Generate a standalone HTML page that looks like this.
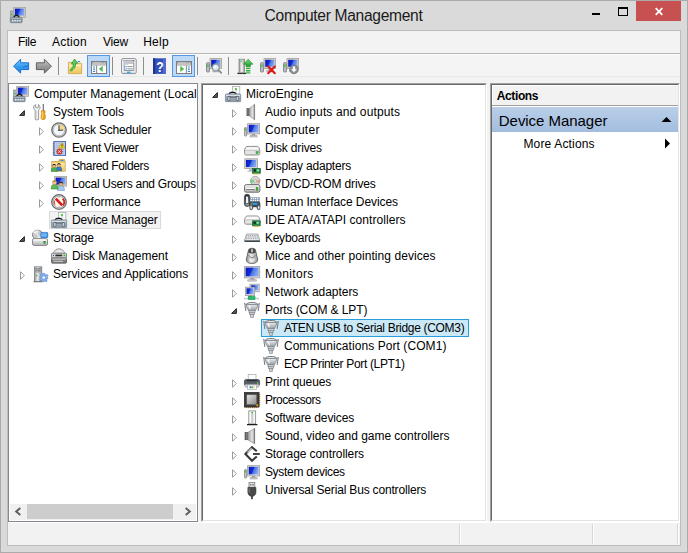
<!DOCTYPE html>
<html lang="en"><head><meta charset="utf-8"><title>Computer Management</title>
<style>
html,body{margin:0;padding:0}
body{width:688px;height:553px;position:relative;overflow:hidden;background:#dadada;font-family:"Liberation Sans",sans-serif;font-size:12px;color:#000}
div,span,svg{position:absolute;box-sizing:border-box}
.t{white-space:nowrap;line-height:20px;height:20px}
.ic{overflow:visible}
#outer{left:0;top:0;width:688px;height:553px;border:1px solid #ababab}
#cedge{left:7px;top:30px;width:674px;height:516px;border:1px solid #bcbcbc;background:#f3f3f3}
#menu{left:8px;top:31px;width:672px;height:22px;background:#f3f3f3}
#msep{left:8px;top:53px;width:672px;height:1px;background:#b6b6b6}
#msep2{left:8px;top:54px;width:672px;height:1px;background:#fcfcfc}
#tbar{left:8px;top:55px;width:672px;height:22px;background:#f4f4f4}
#tgap{left:8px;top:76px;width:672px;height:7px;background:#f3f3f3;border-top:1px solid #e5e7e9}
.vsep{width:1px;height:18px;top:57px;background:#8d8d8d}
.tog{top:55px;width:23px;height:22px;background:#bcdaf8;border:1px solid #5698e4}
#close{left:636px;top:1px;width:45px;height:20px;background:#c75050}
#lp{left:8px;top:83px;width:190px;height:439px;background:#fff;border:1px solid #828790}
#mp{left:201px;top:83px;width:286px;height:439px;background:#fff;border-style:solid;border-width:1px;border-color:#a0a0a0 #fff #fff #a0a0a0}
#mp i{position:absolute;left:0;top:0;right:0;bottom:0;border-style:solid;border-width:1px;border-color:#696969 #e3e3e3 #e3e3e3 #696969}
#ap{left:490px;top:83px;width:190px;height:439px;background:#fff;border-style:solid;border-width:1px;border-color:#a0a0a0 #fff #fff #a0a0a0}
#ap i{position:absolute;left:0;top:0;right:0;bottom:0;border-style:solid;border-width:1px;border-color:#696969 #e3e3e3 #e3e3e3 #696969}
#ahdr{left:492px;top:85px;width:186px;height:20px;background:#f2f2f2;border-top:1px solid #fff;border-left:1px solid #fff}
#ahl{left:492px;top:105px;width:186px;height:1px;background:#a0a0a0}
#aband{left:492px;top:107px;width:186px;height:25px;background:linear-gradient(#b9cfe9,#a3bddf)}
#status{left:8px;top:522px;width:672px;height:23px;background:#f2f2f2;border-top:1px solid #fff}
.sdiv{top:524px;width:2px;height:20px;border-left:1px solid #d7d7d7;border-right:1px solid #fff}
#lsel{left:49px;top:211px;width:112px;height:18px;background:#f2f2f2;border:1px solid #dadada}
#msel{left:261px;top:319px;width:208px;height:18px;background:#cbe8f6;border:1px solid #26a0da}
#hs{left:10px;top:504px;width:186px;height:16px;background:#f0f0f0}
#hthumb{left:27px;top:504px;width:146px;height:15px;background:#cdcdcd}
</style></head><body>
<div id="outer"></div>
<div id="cedge"></div>
<div id="menu"></div><div id="msep"></div><div id="msep2"></div><div id="tbar"></div><div id="tgap"></div>

<svg width="0" height="0" style="position:absolute"><defs>
<linearGradient id="gScr" x1="0" y1="0" x2="1" y2="0.3"><stop offset="0" stop-color="#0a14bc"/><stop offset="0.5" stop-color="#1230d2"/><stop offset="0.6" stop-color="#4a72e8"/><stop offset="1" stop-color="#86a6f2"/></linearGradient>
<linearGradient id="gBack" x1="0" y1="0" x2="0" y2="1"><stop offset="0" stop-color="#7cc8fb"/><stop offset="0.5" stop-color="#3a9ff0"/><stop offset="1" stop-color="#1b7fe0"/></linearGradient>
<linearGradient id="gFwd" x1="0" y1="0" x2="0" y2="1"><stop offset="0" stop-color="#c6c6c6"/><stop offset="0.5" stop-color="#9c9c9c"/><stop offset="1" stop-color="#7c7c7c"/></linearGradient>
<linearGradient id="gTool" x1="0" y1="0" x2="0" y2="1"><stop offset="0" stop-color="#b4c0c9"/><stop offset="0.35" stop-color="#9fadb8"/><stop offset="1" stop-color="#8898a5"/></linearGradient>
<linearGradient id="gMetalH" x1="0" y1="0" x2="1" y2="0"><stop offset="0" stop-color="#8a8a8a"/><stop offset="0.4" stop-color="#ececec"/><stop offset="1" stop-color="#9a9a9a"/></linearGradient>
<linearGradient id="gMetalV" x1="0" y1="0" x2="0" y2="1"><stop offset="0" stop-color="#f4f4f4"/><stop offset="1" stop-color="#b4b4b4"/></linearGradient>
<linearGradient id="gCone" x1="0" y1="0" x2="1" y2="0"><stop offset="0" stop-color="#9a9a9a"/><stop offset="0.6" stop-color="#e2e2e2"/><stop offset="1" stop-color="#b4b4b4"/></linearGradient>
<linearGradient id="gPort" x1="0" y1="0" x2="0" y2="1"><stop offset="0" stop-color="#eef0f2"/><stop offset="1" stop-color="#959ba1"/></linearGradient>
<linearGradient id="gGreen" x1="0" y1="0" x2="0" y2="1"><stop offset="0" stop-color="#7be07b"/><stop offset="1" stop-color="#1f9a2c"/></linearGradient>
<linearGradient id="gFold" x1="0" y1="0" x2="0" y2="1"><stop offset="0" stop-color="#fbe9a6"/><stop offset="1" stop-color="#efc85c"/></linearGradient>
<linearGradient id="gCpu" x1="0" y1="0" x2="1" y2="1"><stop offset="0" stop-color="#e6e6e6"/><stop offset="1" stop-color="#8a8a8a"/></linearGradient>
<radialGradient id="gDisc" cx="0.5" cy="0.5" r="0.5"><stop offset="0" stop-color="#fff"/><stop offset="0.25" stop-color="#c8c8c8"/><stop offset="1" stop-color="#e4e4e4"/></radialGradient>
</defs></svg>
<svg class="ic" style="left:10px;top:7px" width="16" height="16" viewBox="0 0 16 16"><rect x="0.6" y="4" width="2.6" height="6.6" fill="#b4b8bc" stroke="#7d8186" stroke-width="0.6"/><rect x="1.1" y="6.6" width="1.3" height="1.6" fill="#35c835"/><rect x="3.6" y="0.5" width="12" height="9.8" fill="#d8d5c6" stroke="#a8a597" stroke-width="0.8"/><rect x="4.8" y="1.6" width="9.6" height="7" fill="url(#gScr)"/><path d="M4 10.6 C4 7.8 9 7.8 9 10.6" fill="none" stroke="#1e2226" stroke-width="1.4"/><rect x="0.3" y="10.5" width="11.8" height="5.2" rx="0.8" fill="url(#gTool)" stroke="#6b7a86" stroke-width="0.7"/><rect x="0.8" y="12.3" width="10.8" height="0.8" fill="#55636e"/><rect x="2" y="12.7" width="1.4" height="1.6" fill="#eef2f5"/><rect x="4.4" y="12.7" width="1.4" height="1.6" fill="#eef2f5"/><rect x="6.8" y="12.7" width="1.4" height="1.6" fill="#eef2f5"/><rect x="9.2" y="12.7" width="1.4" height="1.6" fill="#eef2f5"/></svg>
<div id="close"></div>
<svg class="ic" style="left:592px;top:13px" width="8" height="2"><rect width="8" height="2" fill="#000"/></svg>
<svg class="ic" style="left:618px;top:7px" width="10" height="9"><path d="M0 0H10V9H0Z M1 2V8H9V2Z" fill="#000" fill-rule="evenodd"/></svg>
<svg class="ic" style="left:655px;top:8px" width="8" height="7" viewBox="0 0 8 7"><path d="M0.7 0.2 L7.3 6.8 M7.3 0.2 L0.7 6.8" stroke="#fff" stroke-width="1.8" fill="none"/></svg>
<div class="tog" style="left:87px"></div><div class="tog" style="left:172px"></div>
<div class="vsep" style="left:58px"></div>
<div class="vsep" style="left:112px"></div>
<div class="vsep" style="left:143px"></div>
<div class="vsep" style="left:197px"></div>
<div class="vsep" style="left:228px"></div>
<svg class="ic" style="left:13px;top:58px" width="16" height="16" viewBox="0 0 16 16"><path d="M0.6 8.2 L7.6 1.2 L7.6 4.8 L15.6 4.8 L15.6 11.6 L7.6 11.6 L7.6 15.2 Z" fill="url(#gBack)" stroke="#1a6fd0" stroke-width="1" stroke-linejoin="round"/><path d="M8.5 9.2 L14.6 9.2 L14.6 6.6 Z" fill="#1560c8" opacity="0.55"/></svg>
<svg class="ic" style="left:36px;top:58px" width="16" height="16" viewBox="0 0 16 16"><path d="M15.4 8.2 L8.4 1.2 L8.4 4.8 L0.4 4.8 L0.4 11.6 L8.4 11.6 L8.4 15.2 Z" fill="url(#gFwd)" stroke="#5e5e5e" stroke-width="1" stroke-linejoin="round"/></svg>
<svg class="ic" style="left:67px;top:58px" width="16" height="16" viewBox="0 0 16 16"><path d="M1.4 4.4 H6.4 L7.4 5.6 H14.6 V15.6 H1.4 Z" fill="url(#gFold)" stroke="#cfa94e" stroke-width="0.9"/><path d="M2 7.6 H14" stroke="#fff6d2" stroke-width="1"/><path d="M3 12.6 C3.6 10.6 6.6 10 6.4 5.8 L4.4 6 L7.6 1 L10.6 5 L8.6 5.4 C9 10.4 5.4 11.4 4.6 13 Z" fill="#5fd05f" stroke="#1f8a28" stroke-width="0.7" stroke-linejoin="round"/><rect x="10.8" y="3" width="2.4" height="1.2" fill="#4a8ae0"/></svg>
<svg class="ic" style="left:91px;top:58px" width="16" height="16" viewBox="0 0 16 16"><rect x="0.5" y="3.5" width="15" height="12" fill="#fff" stroke="#7e7e7e" stroke-width="1"/><rect x="1" y="4" width="14" height="1.8" fill="#8c8c8c"/><rect x="1.6" y="4.5" width="8.8" height="0.8" fill="#f4f4f4"/><rect x="11.2" y="4.4" width="1.1" height="1" fill="#f4f4f4"/><rect x="13.2" y="4.4" width="1.1" height="1" fill="#f4f4f4"/><rect x="1" y="5.8" width="14" height="0.8" fill="#e2e2e2"/><rect x="1" y="6.6" width="14" height="0.8" fill="#858585"/><rect x="5.2" y="7.4" width="0.9" height="8" fill="#7a7a7a"/><rect x="2" y="8.4" width="2.2" height="1.2" rx="0.6" fill="#3f7fd0"/><rect x="2" y="10.6" width="2.2" height="1.2" rx="0.6" fill="#3f7fd0"/><rect x="2" y="12.8" width="2.2" height="1.2" rx="0.6" fill="#3f7fd0"/><path d="M11.4 8.4 V13.4 L8.2 10.9 Z" fill="#4cc04c" stroke="#38a838" stroke-width="0.5" stroke-linejoin="round"/></svg>
<svg class="ic" style="left:121px;top:58px" width="16" height="16" viewBox="0 0 16 16"><rect x="0.6" y="0.6" width="14.6" height="15" rx="1.4" fill="#f8f9fb" stroke="#858585" stroke-width="0.9"/><rect x="2" y="2" width="11.8" height="1.6" fill="#a9aeb4"/><rect x="11.6" y="2.1" width="1.6" height="1.3" fill="#8a8a8a"/><rect x="3.2" y="5" width="9.6" height="7.4" fill="#fff" stroke="#7e848c" stroke-width="0.9"/><rect x="3.2" y="5" width="4" height="1.8" fill="#c8ced6"/><rect x="4.4" y="8" width="1.3" height="1.2" fill="#3f8ee6"/><rect x="6.4" y="8.1" width="5.2" height="1" fill="#8d949c"/><rect x="4.4" y="10.2" width="1.3" height="1.2" fill="#3f8ee6"/><rect x="6.4" y="10.3" width="5.2" height="1" fill="#8d949c"/><rect x="2" y="13.6" width="11.8" height="1.4" fill="#d6dbe0"/><rect x="6" y="13.6" width="3.4" height="1.6" fill="#2fa7ee"/></svg>
<svg class="ic" style="left:152px;top:58px" width="16" height="16" viewBox="0 0 16 16"><rect x="1" y="0.3" width="13" height="15.6" fill="#3350b8"/><rect x="1" y="0.3" width="2.2" height="15.6" fill="#22348c"/><rect x="11" y="0.3" width="3" height="15.6" fill="#5876d6" opacity="0.7"/><text transform="translate(7.9 13.6) scale(0.84 1)" text-anchor="middle" font-family="Liberation Sans,sans-serif" font-weight="700" font-size="14.5" fill="#fff">?</text></svg>
<svg class="ic" style="left:176px;top:58px" width="16" height="16" viewBox="0 0 16 16"><rect x="0.5" y="3.5" width="15" height="12" fill="#fff" stroke="#7e7e7e" stroke-width="1"/><rect x="1" y="4" width="14" height="1.8" fill="#8c8c8c"/><rect x="1.6" y="4.5" width="8.8" height="0.8" fill="#f4f4f4"/><rect x="11.2" y="4.4" width="1.1" height="1" fill="#f4f4f4"/><rect x="13.2" y="4.4" width="1.1" height="1" fill="#f4f4f4"/><rect x="1" y="5.8" width="14" height="0.8" fill="#e2e2e2"/><rect x="1" y="6.6" width="14" height="0.8" fill="#858585"/><rect x="9.9" y="7.4" width="0.9" height="8" fill="#7a7a7a"/><rect x="11.8" y="8.4" width="2.2" height="1.2" rx="0.6" fill="#3f7fd0"/><rect x="11.8" y="10.6" width="2.2" height="1.2" rx="0.6" fill="#3f7fd0"/><rect x="11.8" y="12.8" width="2.2" height="1.2" rx="0.6" fill="#3f7fd0"/><path d="M4.6 8.4 V13.4 L7.8 10.9 Z" fill="#4cc04c" stroke="#38a838" stroke-width="0.5" stroke-linejoin="round"/></svg>
<svg class="ic" style="left:206px;top:58px" width="16" height="16" viewBox="0 0 16 16"><rect x="0.5" y="4.6" width="3" height="9.4" rx="1" fill="#b9bdc1" stroke="#72777c" stroke-width="0.8"/><rect x="1.3" y="6.4" width="1.3" height="2.4" fill="#35c035"/><rect x="4" y="0.6" width="11.6" height="9.8" fill="#d9d6c8" stroke="#a29f92" stroke-width="0.8"/><rect x="5.2" y="1.8" width="9.2" height="7" fill="url(#gScr)"/><rect x="8.6" y="10.8" width="3" height="1.6" fill="#9a9a9a"/><rect x="6.6" y="12.2" width="7" height="1.6" rx="0.6" fill="#c4c4c4" stroke="#8a8a8a" stroke-width="0.5"/><circle cx="9.8" cy="9.4" r="3.5" fill="#dbeeff" fill-opacity="0.85" stroke="#8e9499" stroke-width="1.3"/><circle cx="9.2" cy="8.8" r="1.6" fill="#fff" opacity="0.8"/><path d="M12.4 12 L15.2 14.8" stroke="#8a8f94" stroke-width="1.9" stroke-linecap="round"/></svg>
<svg class="ic" style="left:237px;top:58px" width="16" height="16" viewBox="0 0 16 16"><path d="M0.4 15.4 H9" stroke="#222" stroke-width="1.3"/><rect x="2" y="1.2" width="5.6" height="13.6" fill="url(#gMetalH)" stroke="#8a8a8a" stroke-width="0.8"/><rect x="3.3" y="2.6" width="1.4" height="1.4" fill="#4ccc4c"/><rect x="4.4" y="6" width="1.2" height="8" fill="#fafafa" opacity="0.8"/><path d="M11.2 1.2 L15.8 6.2 H13.4 V8.4 H9 V6.2 H6.6 Z" fill="url(#gGreen)" stroke="#1e8e28" stroke-width="0.7"/><rect x="9" y="9.6" width="4.4" height="1.5" fill="#2fae3a"/><rect x="9" y="12" width="4.4" height="1.5" fill="#2fae3a"/><rect x="9" y="14.3" width="4.4" height="1.2" fill="#2fae3a"/></svg>
<svg class="ic" style="left:260px;top:58px" width="16" height="16" viewBox="0 0 16 16"><rect x="0.5" y="4.6" width="3" height="9.4" rx="1" fill="#b9bdc1" stroke="#72777c" stroke-width="0.8"/><rect x="1.3" y="6.4" width="1.3" height="2.4" fill="#35c035"/><rect x="4" y="0.6" width="11.6" height="9.8" fill="#d9d6c8" stroke="#a29f92" stroke-width="0.8"/><rect x="5.2" y="1.8" width="9.2" height="7" fill="url(#gScr)"/><rect x="8.6" y="10.8" width="3" height="1.6" fill="#9a9a9a"/><rect x="6.6" y="12.2" width="7" height="1.6" rx="0.6" fill="#c4c4c4" stroke="#8a8a8a" stroke-width="0.5"/><path d="M8.2 8.6 L14.8 15.2 M14.8 8.6 L8.2 15.2" stroke="#e01616" stroke-width="2.1" stroke-linecap="round"/></svg>
<svg class="ic" style="left:283px;top:58px" width="16" height="16" viewBox="0 0 16 16"><rect x="0.5" y="4.6" width="3" height="9.4" rx="1" fill="#b9bdc1" stroke="#72777c" stroke-width="0.8"/><rect x="1.3" y="6.4" width="1.3" height="2.4" fill="#35c035"/><rect x="4" y="0.6" width="11.6" height="9.8" fill="#d9d6c8" stroke="#a29f92" stroke-width="0.8"/><rect x="5.2" y="1.8" width="9.2" height="7" fill="url(#gScr)"/><rect x="8.6" y="10.8" width="3" height="1.6" fill="#9a9a9a"/><rect x="6.6" y="12.2" width="7" height="1.6" rx="0.6" fill="#c4c4c4" stroke="#8a8a8a" stroke-width="0.5"/><circle cx="11" cy="11.4" r="4.3" fill="#8f9296" stroke="#6c6f73" stroke-width="0.8"/><path d="M9.9 8.6 H12.1 V11.2 H13.8 L11 14.2 L8.2 11.2 H9.9 Z" fill="#fff"/></svg>
<div id="lp"></div><div id="mp"><i></i></div><div id="ap"><i></i></div>
<div id="lsel"></div><div id="msel"></div>
<svg class="ic" style="left:13px;top:86px" width="16" height="16" viewBox="0 0 16 16"><rect x="0.6" y="4" width="2.6" height="6.6" fill="#b4b8bc" stroke="#7d8186" stroke-width="0.6"/><rect x="1.1" y="6.6" width="1.3" height="1.6" fill="#35c835"/><rect x="3.6" y="0.5" width="12" height="9.8" fill="#d8d5c6" stroke="#a8a597" stroke-width="0.8"/><rect x="4.8" y="1.6" width="9.6" height="7" fill="url(#gScr)"/><path d="M4 10.6 C4 7.8 9 7.8 9 10.6" fill="none" stroke="#1e2226" stroke-width="1.4"/><rect x="0.3" y="10.5" width="11.8" height="5.2" rx="0.8" fill="url(#gTool)" stroke="#6b7a86" stroke-width="0.7"/><rect x="0.8" y="12.3" width="10.8" height="0.8" fill="#55636e"/><rect x="2" y="12.7" width="1.4" height="1.6" fill="#eef2f5"/><rect x="4.4" y="12.7" width="1.4" height="1.6" fill="#eef2f5"/><rect x="6.8" y="12.7" width="1.4" height="1.6" fill="#eef2f5"/><rect x="9.2" y="12.7" width="1.4" height="1.6" fill="#eef2f5"/></svg>
<svg class="ic" style="left:32px;top:104px" width="16" height="16" viewBox="0 0 16 16"><path d="M3.2 15.4 V6.2 C1.6 5.4 1 3.4 2.2 1.6 L3.6 0.6 V3.4 L5 4 L6.4 3.4 V0.6 C8.4 1.6 8.6 4.8 6.6 6.2 V15.4 C6 16 3.8 16 3.2 15.4 Z" fill="#f3f3f3" stroke="#8d8d8d" stroke-width="0.9" stroke-linejoin="round"/><path d="M4.2 7 V14.6" stroke="#c9c9c9" stroke-width="0.9"/><rect x="10.6" y="0" width="1.2" height="7.4" fill="#9a9a9a"/><rect x="11.2" y="0" width="0.6" height="7.4" fill="#5e5e5e"/><path d="M9.4 6.8 H13 V9 L12.4 9.8 L13.2 11 V14.6 C13.2 15.8 9.2 15.8 9.2 14.6 V11 L10 9.8 L9.4 9 Z" fill="#f0a81a" stroke="#bd7a08" stroke-width="0.7"/><path d="M10.4 7.4 V14.6" stroke="#ffd873" stroke-width="0.9"/></svg>
<svg class="ic" style="left:18.4px;top:109px" width="8" height="8" viewBox="0 0 8 8"><path d="M6.4 1.6 L6.4 6.4 L1.6 6.4 Z" fill="#595959" stroke="#262626" stroke-width="1" stroke-linejoin="miter"/></svg>
<svg class="ic" style="left:51px;top:122px" width="16" height="16" viewBox="0 0 16 16"><circle cx="8" cy="8" r="7.2" fill="#dcdcdc" stroke="#6c6c6c" stroke-width="1.3"/><circle cx="8" cy="8" r="5.7" fill="#f3f7fc" stroke="#a4a4a4" stroke-width="0.7"/><path d="M8 8 V2.3 A5.7 5.7 0 0 1 13.7 8 Z" fill="#f5dc8c"/><path d="M8 3.2 V9 M7.2 8.2 H12.2" stroke="#3a3a3a" stroke-width="1" fill="none"/></svg>
<svg class="ic" style="left:38px;top:126px" width="7" height="11" viewBox="0 0 7 11"><path d="M1.5 1.7 L5.3 5.5 L1.5 9.3 Z" fill="#fff" stroke="#9a9a9a" stroke-width="1" stroke-linejoin="miter"/></svg>
<svg class="ic" style="left:51px;top:140px" width="16" height="16" viewBox="0 0 16 16"><g transform="translate(0.8 0.7) scale(0.94)"><rect x="2.2" y="1" width="12.4" height="14.6" fill="#cfdcf3" stroke="#4965b4" stroke-width="1.1"/><path d="M4 3.4 H13.6 M4 5.4 H13.6 M4 7.4 H13.6 M4 9.4 H13.6 M4 11.4 H13.6 M4 13.4 H13.6" stroke="#8ba0d4" stroke-width="0.8"/><path d="M1 2.6 H3.2 M1 4.6 H3.2 M1 6.6 H3.2 M1 8.6 H3.2 M1 10.6 H3.2 M1 12.6 H3.2 M1 14.4 H3.2" stroke="#6e7078" stroke-width="1"/><path d="M10.8 1.8 L14.4 8 H7.2 Z" fill="#f9d628" stroke="#b8920a" stroke-width="0.6" stroke-linejoin="round"/><rect x="10.4" y="3.8" width="0.9" height="2.2" fill="#222"/><rect x="10.4" y="6.5" width="0.9" height="0.8" fill="#222"/><circle cx="8.2" cy="11.6" r="2.9" fill="#dc3a32" stroke="#a81c18" stroke-width="0.5"/><path d="M7 10.4 L9.4 12.8 M9.4 10.4 L7 12.8" stroke="#fff" stroke-width="1"/></g></svg>
<svg class="ic" style="left:38px;top:144px" width="7" height="11" viewBox="0 0 7 11"><path d="M1.5 1.7 L5.3 5.5 L1.5 9.3 Z" fill="#fff" stroke="#9a9a9a" stroke-width="1" stroke-linejoin="miter"/></svg>
<svg class="ic" style="left:51px;top:158px" width="16" height="16" viewBox="0 0 16 16"><path d="M0.6 3.6 H7.4 L8.4 1.4 H13.4 L14.2 3.6 V13.2 H0.6 Z" fill="#e9c35a" stroke="#c19a32" stroke-width="0.7"/><rect x="1" y="4.6" width="12.8" height="8.4" fill="url(#gFold)"/><rect x="9.4" y="2" width="3.2" height="1.1" fill="#4a8ae0"/><g transform="translate(0.2 4.6) scale(0.86)"><path d="M5.6 9.4 C5.6 5.3999999999999995 7.199999999999999 4.6 9.0 4.6 C10.8 4.6 12.399999999999999 5.3999999999999995 12.399999999999999 9.4 Z" fill="#3b78cc" stroke="#1f4f9a" stroke-width="0.6"/><circle cx="9.0" cy="3.0" r="2.1" fill="#e8b98a" stroke="#9c6b3a" stroke-width="0.4"/><path d="M6.8999999999999995 2.8 C6.8999999999999995 0.20000000000000007 11.1 0.20000000000000007 11.1 2.8 C10.2 1.6 7.8 1.6 6.8999999999999995 2.8 Z" fill="#2a2a2a"/><path d="M0 10.2 C0 6.199999999999999 1.6 5.4 3.4 5.4 C5.2 5.4 6.8 6.199999999999999 6.8 10.2 Z" fill="#49b05a" stroke="#24803a" stroke-width="0.6"/><circle cx="3.4" cy="3.8000000000000003" r="2.1" fill="#e8b98a" stroke="#9c6b3a" stroke-width="0.4"/><path d="M1.3 3.6 C1.3 1.0 5.5 1.0 5.5 3.6 C4.6 2.4000000000000004 2.2 2.4000000000000004 1.3 3.6 Z" fill="#2a2a2a"/></g></svg>
<svg class="ic" style="left:38px;top:162px" width="7" height="11" viewBox="0 0 7 11"><path d="M1.5 1.7 L5.3 5.5 L1.5 9.3 Z" fill="#fff" stroke="#9a9a9a" stroke-width="1" stroke-linejoin="miter"/></svg>
<svg class="ic" style="left:51px;top:176px" width="16" height="16" viewBox="0 0 16 16"><rect x="3.6" y="0.5" width="12" height="9.6" fill="#d8d5c6" stroke="#a8a597" stroke-width="0.8"/><rect x="4.7" y="1.6" width="9.8" height="7" fill="url(#gScr)"/><rect x="8.6" y="10.2" width="4" height="1.2" fill="#a9a9a9"/><path d="M6.6 14.399999999999999 C6.6 10.399999999999999 8.2 9.6 10.0 9.6 C11.8 9.6 13.399999999999999 10.399999999999999 13.399999999999999 14.399999999999999 Z" fill="#a8cdee" stroke="#5c8fc0" stroke-width="0.6"/><circle cx="10.0" cy="8.0" r="2.1" fill="#e0b07c" stroke="#9c6b3a" stroke-width="0.4"/><path d="M7.8999999999999995 7.8 C7.8999999999999995 5.2 12.1 5.2 12.1 7.8 C11.2 6.6 8.8 6.6 7.8999999999999995 7.8 Z" fill="#3a2a1a"/><path d="M0.2 13.0 C0.2 9.0 1.8 8.2 3.6 8.2 C5.4 8.2 7.0 9.0 7.0 13.0 Z" fill="#5cb85c" stroke="#2c8a38" stroke-width="0.6"/><circle cx="3.6" cy="6.6000000000000005" r="2.1" fill="#efc592" stroke="#9c6b3a" stroke-width="0.4"/><path d="M1.5 6.4 C1.5 3.8000000000000003 5.7 3.8000000000000003 5.7 6.4 C4.8 5.2 2.4000000000000004 5.2 1.5 6.4 Z" fill="#a8803a"/></svg>
<svg class="ic" style="left:38px;top:180px" width="7" height="11" viewBox="0 0 7 11"><path d="M1.5 1.7 L5.3 5.5 L1.5 9.3 Z" fill="#fff" stroke="#9a9a9a" stroke-width="1" stroke-linejoin="miter"/></svg>
<svg class="ic" style="left:51px;top:194px" width="16" height="16" viewBox="0 0 16 16"><circle cx="8" cy="8" r="7.3" fill="#d8d8d8" stroke="#6a6a6a" stroke-width="1.3"/><circle cx="8" cy="8" r="5.8" fill="#fbf8ee" stroke="#9c9c9c" stroke-width="0.7"/><path d="M8 2.8 V3.8 M8 12.2 V13.2 M2.8 8 H3.8" stroke="#777" stroke-width="0.7"/><path d="M4.8 4.6 L11.2 11.4" stroke="#d81e1e" stroke-width="2.7"/><path d="M11.6 4.8 C13.6 6.6 13.6 9.6 12 11.4" fill="none" stroke="#d81e1e" stroke-width="1.9"/><path d="M3.6 6.6 C3 8 3.2 9.6 4 10.8" fill="none" stroke="#d81e1e" stroke-width="1"/></svg>
<svg class="ic" style="left:38px;top:198px" width="7" height="11" viewBox="0 0 7 11"><path d="M1.5 1.7 L5.3 5.5 L1.5 9.3 Z" fill="#fff" stroke="#9a9a9a" stroke-width="1" stroke-linejoin="miter"/></svg>
<svg class="ic" style="left:51px;top:212px" width="16" height="16" viewBox="0 0 16 16"><rect x="7.4" y="0.5" width="7.4" height="8" fill="#fdfdfd" stroke="#a9adb1" stroke-width="0.8"/><rect x="9.8" y="3.4" width="2.2" height="4.6" fill="#d5d9dc"/><rect x="9.9" y="1.9" width="2.1" height="2.1" rx="0.6" fill="#4ccc3a"/><path d="M4.2 8.4 C4.6 5.4 10.6 5.4 11 8.4" fill="none" stroke="#fff" stroke-width="2.6"/><path d="M4.2 8.2 C4.8 5.6 10.4 5.6 11 8.2" fill="none" stroke="#15181b" stroke-width="1.5"/><rect x="0.4" y="7.9" width="15.3" height="7.8" rx="0.8" fill="url(#gTool)" stroke="#74838f" stroke-width="0.7"/><rect x="1" y="9.2" width="14" height="0.8" fill="#e3e9ee"/><rect x="3" y="10.6" width="10" height="0.9" fill="#4c5761"/><rect x="3" y="10.4" width="1.9" height="4.2" fill="#f4f6f8" stroke="#3c444c" stroke-width="0.6"/><rect x="11.2" y="10.4" width="1.9" height="4.2" fill="#f4f6f8" stroke="#3c444c" stroke-width="0.6"/></svg>
<svg class="ic" style="left:32px;top:230px" width="16" height="16" viewBox="0 0 16 16"><ellipse cx="5.6" cy="4.8" rx="5.2" ry="4.6" fill="#c9c9c9" stroke="#7e7e7e" stroke-width="0.9"/><path d="M5.6 4.8 L1 2.8 A5.2 4.6 0 0 1 6.6 0.3 Z" fill="#efefef"/><path d="M5.6 4.8 L10.2 6.8 A5.2 4.6 0 0 1 4.6 9.3 Z" fill="#e6e6e6"/><circle cx="5.6" cy="4.8" r="1.3" fill="#fff" stroke="#9a9a9a" stroke-width="0.5"/><rect x="8.8" y="2.4" width="7" height="5.4" rx="0.8" fill="#2f8fe6" stroke="#1c64b8" stroke-width="0.6"/><rect x="9.2" y="3.6" width="5.6" height="0.9" fill="#a8d6ff"/><rect x="9.2" y="5.4" width="5.6" height="0.9" fill="#a8d6ff"/><rect x="0.5" y="8.6" width="15" height="6.8" rx="1.6" fill="url(#gMetalV)" stroke="#7c7c7c" stroke-width="0.9"/><rect x="1.4" y="9.4" width="13.2" height="1.2" rx="0.6" fill="#fff"/><rect x="11.8" y="11.2" width="1.7" height="2.4" fill="#36c236" stroke="#1d7e22" stroke-width="0.4"/></svg>
<svg class="ic" style="left:18.4px;top:235px" width="8" height="8" viewBox="0 0 8 8"><path d="M6.4 1.6 L6.4 6.4 L1.6 6.4 Z" fill="#595959" stroke="#262626" stroke-width="1" stroke-linejoin="miter"/></svg>
<svg class="ic" style="left:51px;top:248px" width="16" height="16" viewBox="0 0 16 16"><path d="M2.4 6 C2.4 -1 13.6 -1 13.6 6 Z" fill="#e9e9e9" stroke="#8a8a8a" stroke-width="0.8"/><ellipse cx="8" cy="3.2" rx="3.4" ry="1.2" fill="#fbfbfb" stroke="#b0b0b0" stroke-width="0.5"/><rect x="0.5" y="5.2" width="15" height="4.8" rx="0.8" fill="#d4d4d4" stroke="#6e6e6e" stroke-width="0.8"/><rect x="4.4" y="6.6" width="6.8" height="1.7" fill="#2c2c2c"/><rect x="2" y="7" width="1" height="1" fill="#2a4ad0"/><rect x="12.6" y="6.6" width="1.6" height="1.6" fill="#36c236"/><rect x="0.5" y="10" width="15" height="5.2" rx="0.8" fill="#7c7c7c" stroke="#5e5e5e" stroke-width="0.8"/><rect x="1.4" y="10.6" width="13.2" height="0.9" fill="#eaeaea"/><rect x="2.4" y="12.8" width="9.6" height="0.9" fill="#dcdcdc"/></svg>
<svg class="ic" style="left:32px;top:266px" width="16" height="16" viewBox="0 0 16 16"><rect x="2.4" y="0.8" width="7.4" height="14.8" fill="url(#gMetalH)" stroke="#7c838a" stroke-width="0.8"/><rect x="3.6" y="2.4" width="5" height="1" fill="#5e646a"/><rect x="3.6" y="4.4" width="5" height="1" fill="#5e646a"/><rect x="3.6" y="6.4" width="5" height="0.8" fill="#a8aeb4"/><rect x="4" y="9" width="1.3" height="1.3" fill="#3bbf3b"/><path d="M1.4 15.8 H10.6" stroke="#6a6a6a" stroke-width="0.8"/><g transform="translate(11.8 11.6)"><path d="M-0.8 -4.3 H0.8 L1.1 -3.1 L2.3 -2.6 L3.3 -3.3 L4.3 -2.2 L3.5 -1.2 L3.9 0 L4.3 0.8 L3.3 1.1 L2.9 2.3 L3.3 3.3 L2.2 4.3 L1.2 3.5 L0 3.9 L-0.8 4.3 L-1.1 3.3 L-2.3 2.9 L-3.3 3.3 L-4.3 2.2 L-3.5 1.2 L-3.9 0 L-4.3 -0.8 L-3.3 -1.1 L-2.9 -2.3 L-3.3 -3.3 L-2.2 -4.3 L-1.2 -3.5 Z" fill="#86aeec" stroke="#4d7ac8" stroke-width="0.5"/><circle r="1.7" fill="#f4f8ff" stroke="#4d7ac8" stroke-width="0.4"/></g></svg>
<svg class="ic" style="left:19px;top:270px" width="7" height="11" viewBox="0 0 7 11"><path d="M1.5 1.7 L5.3 5.5 L1.5 9.3 Z" fill="#fff" stroke="#9a9a9a" stroke-width="1" stroke-linejoin="miter"/></svg>
<svg class="ic" style="left:225px;top:86px" width="16" height="16" viewBox="0 0 16 16"><rect x="7.4" y="0.5" width="7.4" height="8" fill="#fdfdfd" stroke="#a9adb1" stroke-width="0.8"/><rect x="9.8" y="3.4" width="2.2" height="4.6" fill="#d5d9dc"/><rect x="9.9" y="1.9" width="2.1" height="2.1" rx="0.6" fill="#4ccc3a"/><path d="M4.2 8.4 C4.6 5.4 10.6 5.4 11 8.4" fill="none" stroke="#fff" stroke-width="2.6"/><path d="M4.2 8.2 C4.8 5.6 10.4 5.6 11 8.2" fill="none" stroke="#15181b" stroke-width="1.5"/><rect x="0.4" y="7.9" width="15.3" height="7.8" rx="0.8" fill="url(#gTool)" stroke="#74838f" stroke-width="0.7"/><rect x="1" y="9.2" width="14" height="0.8" fill="#e3e9ee"/><rect x="3" y="10.6" width="10" height="0.9" fill="#4c5761"/><rect x="3" y="10.4" width="1.9" height="4.2" fill="#f4f6f8" stroke="#3c444c" stroke-width="0.6"/><rect x="11.2" y="10.4" width="1.9" height="4.2" fill="#f4f6f8" stroke="#3c444c" stroke-width="0.6"/></svg>
<svg class="ic" style="left:211.4px;top:91px" width="8" height="8" viewBox="0 0 8 8"><path d="M6.4 1.6 L6.4 6.4 L1.6 6.4 Z" fill="#595959" stroke="#262626" stroke-width="1" stroke-linejoin="miter"/></svg>
<svg class="ic" style="left:244px;top:104px" width="16" height="16" viewBox="0 0 16 16"><g transform="translate(0 0) scale(1 1)"><rect x="2.9" y="4.4" width="2.3" height="7.4" fill="#5a5a5a" stroke="#444" stroke-width="0.5"/><rect x="3.5" y="5" width="0.8" height="6.2" fill="#8a8a8a"/><path d="M5.2 4.4 L10.6 0.4 V15.8 L5.2 11.8 Z" fill="url(#gCone)" stroke="#858585" stroke-width="0.6" stroke-linejoin="round"/><path d="M10.4 0.6 V15.6" stroke="#7a7a7a" stroke-width="0.9"/></g></svg>
<svg class="ic" style="left:231px;top:108px" width="7" height="11" viewBox="0 0 7 11"><path d="M1.5 1.7 L5.3 5.5 L1.5 9.3 Z" fill="#fff" stroke="#9a9a9a" stroke-width="1" stroke-linejoin="miter"/></svg>
<svg class="ic" style="left:244px;top:122px" width="16" height="16" viewBox="0 0 16 16"><g transform="translate(0 0.9)"><rect x="0.5" y="4.6" width="2.2" height="8.6" rx="0.8" fill="#c2c2c2" stroke="#777" stroke-width="0.7"/><rect x="1" y="5.6" width="1.2" height="2" fill="#35c835"/><rect x="3.6" y="0.8" width="12" height="10.2" fill="#dcdcdc" stroke="#9c9c9c" stroke-width="0.8"/><rect x="4.7" y="1.9000000000000001" width="9.8" height="7.6" fill="url(#gScr)"/><path d="M8.2 11.2 H11 L11.6 12.6 H7.6 Z" fill="#9a9a9a"/><rect x="5.8" y="12.6" width="7.6" height="1.5" rx="0.7" fill="#cfcfcf" stroke="#8c8c8c" stroke-width="0.5"/></g></svg>
<svg class="ic" style="left:231px;top:126px" width="7" height="11" viewBox="0 0 7 11"><path d="M1.5 1.7 L5.3 5.5 L1.5 9.3 Z" fill="#fff" stroke="#9a9a9a" stroke-width="1" stroke-linejoin="miter"/></svg>
<svg class="ic" style="left:244px;top:140px" width="16" height="16" viewBox="0 0 16 16"><path d="M3 6.4 H13.4 C14.6 6.4 15.8 9.0 15.8 10.0 V13.6 C15.8 14.6 15 15 14 15 H2.4 C1.4 15 0.6 14.6 0.6 13.6 V10.0 C0.6 9.0 1.8 6.4 3 6.4 Z" fill="#e4e4e4" stroke="#858585" stroke-width="0.9"/><path d="M3.2 7.2 H13.2 C14 7.2 14.8 9.0 15 10.0 H1.4 C1.6 9.0 2.4 7.2 3.2 7.2 Z" fill="#f9f9f9"/><path d="M1 10.2 H15.4" stroke="#b8b8b8" stroke-width="0.7"/><rect x="12" y="11.6" width="2.2" height="2" fill="#3ac43a" stroke="#1e7e22" stroke-width="0.4"/></svg>
<svg class="ic" style="left:231px;top:144px" width="7" height="11" viewBox="0 0 7 11"><path d="M1.5 1.7 L5.3 5.5 L1.5 9.3 Z" fill="#fff" stroke="#9a9a9a" stroke-width="1" stroke-linejoin="miter"/></svg>
<svg class="ic" style="left:244px;top:158px" width="16" height="16" viewBox="0 0 16 16"><rect x="0.8" y="0.8" width="12.6" height="9.8" fill="#dcdcdc" stroke="#9c9c9c" stroke-width="0.8"/><rect x="1.9000000000000001" y="1.9000000000000001" width="10.399999999999999" height="7.200000000000001" fill="url(#gScr)"/><rect x="5" y="11.4" width="3.6" height="1.4" fill="#9a9a9a"/><rect x="3.4" y="12.6" width="6" height="1.2" fill="#c4c4c4"/><rect x="8.6" y="10.4" width="7.8" height="5" fill="#1f8a4c" stroke="#0f5a2e" stroke-width="0.6"/><rect x="9.799999999999999" y="11.4" width="2" height="2" fill="#111"/><rect x="12.8" y="11.4" width="2.2" height="2" fill="#9fe0b4"/><rect x="9.6" y="15.4" width="5.6" height="1" fill="#e0b030"/></svg>
<svg class="ic" style="left:231px;top:162px" width="7" height="11" viewBox="0 0 7 11"><path d="M1.5 1.7 L5.3 5.5 L1.5 9.3 Z" fill="#fff" stroke="#9a9a9a" stroke-width="1" stroke-linejoin="miter"/></svg>
<svg class="ic" style="left:244px;top:176px" width="16" height="16" viewBox="0 0 16 16"><circle cx="11.2" cy="5" r="4.7" fill="url(#gDisc)" stroke="#8e8e8e" stroke-width="0.7"/><path d="M11.2 5 L7 3 A4.7 4.7 0 0 0 7.4 8 Z" fill="#5ad06a" opacity="0.7"/><path d="M11.2 5 L15.4 3.4 A4.7 4.7 0 0 1 15 7.6 Z" fill="#f07860" opacity="0.6"/><circle cx="11.2" cy="5" r="1.1" fill="#fff" stroke="#999" stroke-width="0.4"/><rect x="0.5" y="8.6" width="15.4" height="7.6" rx="1.8" fill="url(#gMetalV)" stroke="#707070" stroke-width="1"/><rect x="2" y="12" width="9" height="1" fill="#fff"/><rect x="2" y="13" width="9" height="0.9" fill="#777"/><rect x="12.2" y="11.4" width="1.7" height="3" fill="#36c236" stroke="#1d7e22" stroke-width="0.4"/></svg>
<svg class="ic" style="left:231px;top:180px" width="7" height="11" viewBox="0 0 7 11"><path d="M1.5 1.7 L5.3 5.5 L1.5 9.3 Z" fill="#fff" stroke="#9a9a9a" stroke-width="1" stroke-linejoin="miter"/></svg>
<svg class="ic" style="left:244px;top:194px" width="16" height="16" viewBox="0 0 16 16"><rect x="0.4" y="0.3" width="5.4" height="12.2" rx="2.4" fill="#3c444c" stroke="#252b31" stroke-width="0.6"/><path d="M2.2 2 H4 L4.4 9 H1.8 Z" fill="#f2f2f2"/><rect x="1.2" y="9.6" width="3.8" height="2.2" rx="1" fill="#8e969e"/><rect x="2.3" y="1.2" width="1.6" height="1.4" fill="#1c2024"/><rect x="6" y="3.2" width="9.8" height="4.6" fill="#8a98b6"/><path d="M7 4.4 H15" stroke="#fff" stroke-width="1.1" stroke-dasharray="1.1 0.95"/><path d="M6.4 6.6 H15.6" stroke="#f4f6f8" stroke-width="1.5" stroke-dasharray="1.5 0.7"/><path d="M6.4 7.8 H15.4 C16.3 9.2 16.3 13 15.8 15.6 H13.6 L12.6 12.8 H9.2 L8.2 15.6 H6 C5.4 13 5.4 9.2 6.4 7.8 Z" fill="#4a525c" stroke="#30363c" stroke-width="0.5"/><rect x="9" y="8.8" width="4.2" height="2.2" fill="#2a96f0"/><rect x="7.4" y="8.6" width="1.3" height="1.3" fill="#58d048"/><rect x="6.6" y="10.2" width="1.2" height="1.2" fill="#f09020"/><ellipse cx="7.1" cy="13.4" rx="0.9" ry="1.7" fill="#dfe3e7"/><ellipse cx="14.7" cy="13.4" rx="0.9" ry="1.7" fill="#dfe3e7"/><rect x="9.6" y="11.6" width="3" height="0.9" fill="#23282d"/></svg>
<svg class="ic" style="left:231px;top:198px" width="7" height="11" viewBox="0 0 7 11"><path d="M1.5 1.7 L5.3 5.5 L1.5 9.3 Z" fill="#fff" stroke="#9a9a9a" stroke-width="1" stroke-linejoin="miter"/></svg>
<svg class="ic" style="left:244px;top:212px" width="16" height="16" viewBox="0 0 16 16"><path d="M3 4 H13.4 C14.6 4 15.8 6.6 15.8 7.6 V10.799999999999999 C15.8 11.799999999999999 15 12.2 14 12.2 H2.4 C1.4 12.2 0.6 11.799999999999999 0.6 10.799999999999999 V7.6 C0.6 6.6 1.8 4 3 4 Z" fill="#e4e4e4" stroke="#858585" stroke-width="0.9"/><path d="M3.2 4.8 H13.2 C14 4.8 14.8 6.6 15 7.6 H1.4 C1.6 6.6 2.4 4.8 3.2 4.8 Z" fill="#f9f9f9"/><path d="M1 7.8 H15.4" stroke="#b8b8b8" stroke-width="0.7"/><rect x="8.4" y="8.8" width="7.8" height="5" fill="#1f8a4c" stroke="#0f5a2e" stroke-width="0.6"/><rect x="9.6" y="9.8" width="2" height="2" fill="#111"/><rect x="12.600000000000001" y="9.8" width="2.2" height="2" fill="#9fe0b4"/><rect x="9.4" y="13.8" width="5.6" height="1" fill="#e0b030"/></svg>
<svg class="ic" style="left:231px;top:216px" width="7" height="11" viewBox="0 0 7 11"><path d="M1.5 1.7 L5.3 5.5 L1.5 9.3 Z" fill="#fff" stroke="#9a9a9a" stroke-width="1" stroke-linejoin="miter"/></svg>
<svg class="ic" style="left:244px;top:230px" width="16" height="16" viewBox="0 0 16 16"><path d="M2.6 4 H13.8 L16 10.4 H0.4 Z" fill="#eceef0" stroke="#8e9298" stroke-width="0.7"/><path d="M2.6 5.4 H14 M2.2 6.9 H14.4 M1.8 8.4 H14.8" stroke="#7e848c" stroke-width="0.9" stroke-dasharray="0.9 0.9"/><path d="M0.4 10.4 H16 V11.4 C16 11.8 15.6 12 15.2 12 H1.2 C0.8 12 0.4 11.8 0.4 11.4 Z" fill="#3e444a"/></svg>
<svg class="ic" style="left:231px;top:234px" width="7" height="11" viewBox="0 0 7 11"><path d="M1.5 1.7 L5.3 5.5 L1.5 9.3 Z" fill="#fff" stroke="#9a9a9a" stroke-width="1" stroke-linejoin="miter"/></svg>
<svg class="ic" style="left:244px;top:248px" width="16" height="16" viewBox="0 0 16 16"><path d="M4.6 1.6 C5 -0.2 11 -0.2 11.4 1.6 L12.8 8 C14.6 12 13.8 15.4 8 15.4 C2.2 15.4 1.4 12 3.2 8 Z" fill="url(#gMetalH)" stroke="#5c5c5c" stroke-width="0.9"/><path d="M4.9 1.6 C5.3 0.3 10.7 0.3 11.1 1.6 L11.7 4.4 C9.8 5.8 6.2 5.8 4.3 4.4 Z" fill="#4a4a4a"/><rect x="7.3" y="1" width="1.4" height="3.4" rx="0.7" fill="#e8e8e8"/><path d="M4.6 7 C6 10.6 10 10.6 11.4 7" fill="none" stroke="#6e6e6e" stroke-width="0.8"/><path d="M5.4 11 C7 13.4 9 13.4 10.6 11" fill="none" stroke="#fff" stroke-width="1" opacity="0.9"/></svg>
<svg class="ic" style="left:231px;top:252px" width="7" height="11" viewBox="0 0 7 11"><path d="M1.5 1.7 L5.3 5.5 L1.5 9.3 Z" fill="#fff" stroke="#9a9a9a" stroke-width="1" stroke-linejoin="miter"/></svg>
<svg class="ic" style="left:244px;top:266px" width="16" height="16" viewBox="0 0 16 16"><rect x="0.5" y="0.5" width="15.2" height="11.4" fill="#dcdcdc" stroke="#9c9c9c" stroke-width="0.8"/><rect x="1.6" y="1.6" width="13.0" height="8.8" fill="url(#gScr)"/><path d="M6.4 12 H10 L10.6 13.6 H5.8 Z" fill="#a0a0a0"/><rect x="3.6" y="13.6" width="9" height="1.6" rx="0.7" fill="#d2d2d2" stroke="#8c8c8c" stroke-width="0.5"/></svg>
<svg class="ic" style="left:231px;top:270px" width="7" height="11" viewBox="0 0 7 11"><path d="M1.5 1.7 L5.3 5.5 L1.5 9.3 Z" fill="#fff" stroke="#9a9a9a" stroke-width="1" stroke-linejoin="miter"/></svg>
<svg class="ic" style="left:244px;top:284px" width="16" height="16" viewBox="0 0 16 16"><rect x="6" y="0.2" width="9.2" height="7.6" fill="#dcdcdc" stroke="#9c9c9c" stroke-width="0.8"/><rect x="7.1" y="1.3" width="6.999999999999999" height="5.0" fill="url(#gScr)"/><rect x="1.4" y="3.2" width="9.2" height="8.4" fill="#dcdcdc" stroke="#9c9c9c" stroke-width="0.8"/><rect x="2.5" y="4.300000000000001" width="6.999999999999999" height="5.800000000000001" fill="url(#gScr)"/><rect x="5.4" y="11.6" width="2" height="2" fill="#7a7a7a"/><path d="M0 14.6 H15" stroke="#c9cdd0" stroke-width="1.6"/><rect x="4.2" y="12.4" width="6.8" height="3.2" fill="#1fbf6c" stroke="#14904e" stroke-width="0.5"/></svg>
<svg class="ic" style="left:231px;top:288px" width="7" height="11" viewBox="0 0 7 11"><path d="M1.5 1.7 L5.3 5.5 L1.5 9.3 Z" fill="#fff" stroke="#9a9a9a" stroke-width="1" stroke-linejoin="miter"/></svg>
<svg class="ic" style="left:244px;top:302px" width="16" height="16" viewBox="0 0 16 16"><path d="M0.4 1.2 L0.9 2.2 H15.1 L15.6 1.2" stroke="#6e747a" stroke-width="1" fill="none"/><path d="M0.9 2.2 L1.8 9 M15.1 2.2 L14.2 9" stroke="#7c8288" stroke-width="1.1" fill="none"/><path d="M2.6 2 C4.4 -0.1 11.6 -0.1 13.4 2" fill="#e9ecef" stroke="#666c72" stroke-width="0.9"/><path d="M2.4 2.4 H13.6 L13.1 5.6 C12.5 7.6 11.6 8.2 10.8 8.6 H5.2 C4.4 8.2 3.5 7.6 2.9 5.6 Z" fill="url(#gPort)" stroke="#777d83" stroke-width="0.8" stroke-linejoin="round"/><path d="M4.4 3.4 C5 6 6 7.4 7 7.6 C6.4 6 6.2 4.6 6.4 3.4 Z" fill="#fff" opacity="0.85"/><rect x="4.9" y="8.6" width="6.2" height="1.6" fill="#dfe3e6" stroke="#70767c" stroke-width="0.6"/><rect x="5.6" y="10.2" width="4.8" height="2.2" fill="#c3c8cd" stroke="#70767c" stroke-width="0.6"/><rect x="6.7" y="12.4" width="2.6" height="3.2" fill="url(#gMetalH)" stroke="#7e848a" stroke-width="0.6"/></svg>
<svg class="ic" style="left:230.4px;top:307px" width="8" height="8" viewBox="0 0 8 8"><path d="M6.4 1.6 L6.4 6.4 L1.6 6.4 Z" fill="#595959" stroke="#262626" stroke-width="1" stroke-linejoin="miter"/></svg>
<svg class="ic" style="left:263px;top:320px" width="16" height="16" viewBox="0 0 16 16"><path d="M0.4 1.2 L0.9 2.2 H15.1 L15.6 1.2" stroke="#6e747a" stroke-width="1" fill="none"/><path d="M0.9 2.2 L1.8 9 M15.1 2.2 L14.2 9" stroke="#7c8288" stroke-width="1.1" fill="none"/><path d="M2.6 2 C4.4 -0.1 11.6 -0.1 13.4 2" fill="#e9ecef" stroke="#666c72" stroke-width="0.9"/><path d="M2.4 2.4 H13.6 L13.1 5.6 C12.5 7.6 11.6 8.2 10.8 8.6 H5.2 C4.4 8.2 3.5 7.6 2.9 5.6 Z" fill="url(#gPort)" stroke="#777d83" stroke-width="0.8" stroke-linejoin="round"/><path d="M4.4 3.4 C5 6 6 7.4 7 7.6 C6.4 6 6.2 4.6 6.4 3.4 Z" fill="#fff" opacity="0.85"/><rect x="4.9" y="8.6" width="6.2" height="1.6" fill="#dfe3e6" stroke="#70767c" stroke-width="0.6"/><rect x="5.6" y="10.2" width="4.8" height="2.2" fill="#c3c8cd" stroke="#70767c" stroke-width="0.6"/><rect x="6.7" y="12.4" width="2.6" height="3.2" fill="url(#gMetalH)" stroke="#7e848a" stroke-width="0.6"/></svg>
<svg class="ic" style="left:263px;top:338px" width="16" height="16" viewBox="0 0 16 16"><path d="M0.4 1.2 L0.9 2.2 H15.1 L15.6 1.2" stroke="#6e747a" stroke-width="1" fill="none"/><path d="M0.9 2.2 L1.8 9 M15.1 2.2 L14.2 9" stroke="#7c8288" stroke-width="1.1" fill="none"/><path d="M2.6 2 C4.4 -0.1 11.6 -0.1 13.4 2" fill="#e9ecef" stroke="#666c72" stroke-width="0.9"/><path d="M2.4 2.4 H13.6 L13.1 5.6 C12.5 7.6 11.6 8.2 10.8 8.6 H5.2 C4.4 8.2 3.5 7.6 2.9 5.6 Z" fill="url(#gPort)" stroke="#777d83" stroke-width="0.8" stroke-linejoin="round"/><path d="M4.4 3.4 C5 6 6 7.4 7 7.6 C6.4 6 6.2 4.6 6.4 3.4 Z" fill="#fff" opacity="0.85"/><rect x="4.9" y="8.6" width="6.2" height="1.6" fill="#dfe3e6" stroke="#70767c" stroke-width="0.6"/><rect x="5.6" y="10.2" width="4.8" height="2.2" fill="#c3c8cd" stroke="#70767c" stroke-width="0.6"/><rect x="6.7" y="12.4" width="2.6" height="3.2" fill="url(#gMetalH)" stroke="#7e848a" stroke-width="0.6"/></svg>
<svg class="ic" style="left:263px;top:356px" width="16" height="16" viewBox="0 0 16 16"><path d="M0.4 1.2 L0.9 2.2 H15.1 L15.6 1.2" stroke="#6e747a" stroke-width="1" fill="none"/><path d="M0.9 2.2 L1.8 9 M15.1 2.2 L14.2 9" stroke="#7c8288" stroke-width="1.1" fill="none"/><path d="M2.6 2 C4.4 -0.1 11.6 -0.1 13.4 2" fill="#e9ecef" stroke="#666c72" stroke-width="0.9"/><path d="M2.4 2.4 H13.6 L13.1 5.6 C12.5 7.6 11.6 8.2 10.8 8.6 H5.2 C4.4 8.2 3.5 7.6 2.9 5.6 Z" fill="url(#gPort)" stroke="#777d83" stroke-width="0.8" stroke-linejoin="round"/><path d="M4.4 3.4 C5 6 6 7.4 7 7.6 C6.4 6 6.2 4.6 6.4 3.4 Z" fill="#fff" opacity="0.85"/><rect x="4.9" y="8.6" width="6.2" height="1.6" fill="#dfe3e6" stroke="#70767c" stroke-width="0.6"/><rect x="5.6" y="10.2" width="4.8" height="2.2" fill="#c3c8cd" stroke="#70767c" stroke-width="0.6"/><rect x="6.7" y="12.4" width="2.6" height="3.2" fill="url(#gMetalH)" stroke="#7e848a" stroke-width="0.6"/></svg>
<svg class="ic" style="left:244px;top:374px" width="16" height="16" viewBox="0 0 16 16"><rect x="4.2" y="0.4" width="7.8" height="6" fill="#fdfdfd" stroke="#a4a8ac" stroke-width="0.7"/><path d="M2 5.6 H14 C15 5.6 15.6 6.2 15.6 7.2 V10.8 H0.4 V7.2 C0.4 6.2 1 5.6 2 5.6 Z" fill="#565d64" stroke="#30363c" stroke-width="0.6"/><rect x="3" y="5.8" width="10" height="1.4" fill="#2c3136"/><rect x="1" y="10.2" width="14" height="2.8" rx="0.8" fill="#d6dadd" stroke="#7c8288" stroke-width="0.6"/><rect x="13" y="8.4" width="1.3" height="1.3" fill="#5fe05f"/><rect x="3.6" y="11" width="8.8" height="4.6" fill="#fff" stroke="#9aa0a6" stroke-width="0.6"/><rect x="5.6" y="12.4" width="1.6" height="1.8" fill="#2c62d8"/><rect x="7.4" y="12.4" width="1.6" height="1.8" fill="#36b84a"/><rect x="9.2" y="12.4" width="1.2" height="1.8" fill="#e8c030"/></svg>
<svg class="ic" style="left:231px;top:378px" width="7" height="11" viewBox="0 0 7 11"><path d="M1.5 1.7 L5.3 5.5 L1.5 9.3 Z" fill="#fff" stroke="#9a9a9a" stroke-width="1" stroke-linejoin="miter"/></svg>
<svg class="ic" style="left:244px;top:392px" width="16" height="16" viewBox="0 0 16 16"><path d="M2 15.6 H14 M15.6 2 V14" stroke="#f0a21e" stroke-width="1.2" stroke-dasharray="1 1"/><rect x="0.3" y="0.3" width="14.8" height="14.8" fill="#3c3c3c" stroke="#1e1e1e" stroke-width="0.6"/><rect x="2.8" y="2.8" width="9.8" height="9.8" fill="url(#gCpu)" stroke="#6a6a6a" stroke-width="0.5"/><rect x="12.4" y="12.4" width="1.8" height="1.8" fill="#f0a21e"/></svg>
<svg class="ic" style="left:231px;top:396px" width="7" height="11" viewBox="0 0 7 11"><path d="M1.5 1.7 L5.3 5.5 L1.5 9.3 Z" fill="#fff" stroke="#9a9a9a" stroke-width="1" stroke-linejoin="miter"/></svg>
<svg class="ic" style="left:244px;top:410px" width="16" height="16" viewBox="0 0 16 16"><rect x="4.8" y="0.9" width="6.8" height="13" fill="#fbfbfb" stroke="#8f8f8f" stroke-width="0.9"/><rect x="7.2" y="3.6" width="2.2" height="10" fill="#cdcdcd"/><rect x="7.4" y="1.9" width="1.7" height="1.7" fill="#39c439"/><path d="M3 14.6 H13.4" stroke="#1c1c1c" stroke-width="1.3"/></svg>
<svg class="ic" style="left:231px;top:414px" width="7" height="11" viewBox="0 0 7 11"><path d="M1.5 1.7 L5.3 5.5 L1.5 9.3 Z" fill="#fff" stroke="#9a9a9a" stroke-width="1" stroke-linejoin="miter"/></svg>
<svg class="ic" style="left:244px;top:428px" width="16" height="16" viewBox="0 0 16 16"><g transform="translate(-2.6 0) scale(1.25 1)"><rect x="2.9" y="4.4" width="2.3" height="7.4" fill="#5a5a5a" stroke="#444" stroke-width="0.5"/><rect x="3.5" y="5" width="0.8" height="6.2" fill="#8a8a8a"/><path d="M5.2 4.4 L10.6 0.4 V15.8 L5.2 11.8 Z" fill="url(#gCone)" stroke="#858585" stroke-width="0.6" stroke-linejoin="round"/><path d="M10.4 0.6 V15.6" stroke="#7a7a7a" stroke-width="0.9"/></g></svg>
<svg class="ic" style="left:231px;top:432px" width="7" height="11" viewBox="0 0 7 11"><path d="M1.5 1.7 L5.3 5.5 L1.5 9.3 Z" fill="#fff" stroke="#9a9a9a" stroke-width="1" stroke-linejoin="miter"/></svg>
<svg class="ic" style="left:244px;top:446px" width="16" height="16" viewBox="0 0 16 16"><path d="M12.8 5.2 L8 1.2 L1.4 7.9 L8 14.7 L12.8 10.5" fill="none" stroke="#3a3a3a" stroke-width="2.1" stroke-linejoin="miter"/><path d="M7.6 2.2 L3.4 6.4" stroke="#c4c8cc" stroke-width="1.3"/><rect x="9" y="7" width="6.8" height="2" fill="#454545"/></svg>
<svg class="ic" style="left:231px;top:450px" width="7" height="11" viewBox="0 0 7 11"><path d="M1.5 1.7 L5.3 5.5 L1.5 9.3 Z" fill="#fff" stroke="#9a9a9a" stroke-width="1" stroke-linejoin="miter"/></svg>
<svg class="ic" style="left:244px;top:464px" width="16" height="16" viewBox="0 0 16 16"><g transform="translate(0 0.9)"><rect x="0.5" y="4.6" width="2.2" height="8.6" rx="0.8" fill="#c2c2c2" stroke="#777" stroke-width="0.7"/><rect x="1" y="5.6" width="1.2" height="2" fill="#35c835"/><rect x="3.6" y="0.8" width="12" height="10.2" fill="#dcdcdc" stroke="#9c9c9c" stroke-width="0.8"/><rect x="4.7" y="1.9000000000000001" width="9.8" height="7.6" fill="url(#gScr)"/><path d="M8.2 11.2 H11 L11.6 12.6 H7.6 Z" fill="#9a9a9a"/><rect x="5.8" y="12.6" width="7.6" height="1.5" rx="0.7" fill="#cfcfcf" stroke="#8c8c8c" stroke-width="0.5"/></g></svg>
<svg class="ic" style="left:231px;top:468px" width="7" height="11" viewBox="0 0 7 11"><path d="M1.5 1.7 L5.3 5.5 L1.5 9.3 Z" fill="#fff" stroke="#9a9a9a" stroke-width="1" stroke-linejoin="miter"/></svg>
<svg class="ic" style="left:244px;top:482px" width="16" height="16" viewBox="0 0 16 16"><rect x="5" y="0.5" width="5.8" height="5.2" fill="#dedede" stroke="#7e7e7e" stroke-width="0.8"/><rect x="6.2" y="2" width="1.2" height="1.4" fill="#6a6a6a"/><rect x="8.4" y="2" width="1.2" height="1.4" fill="#6a6a6a"/><path d="M3.9 5.4 H11.9 V10.4 C11.9 12.6 10.2 13.8 9 14.2 H6.8 C5.6 13.8 3.9 12.6 3.9 10.4 Z" fill="#4a4a4a" stroke="#2c2c2c" stroke-width="0.6"/><path d="M5.2 6.4 V10.6" stroke="#8a8a8a" stroke-width="0.9"/><rect x="7.1" y="14" width="1.7" height="3.2" fill="#3a3a3a"/></svg>
<svg class="ic" style="left:231px;top:486px" width="7" height="11" viewBox="0 0 7 11"><path d="M1.5 1.7 L5.3 5.5 L1.5 9.3 Z" fill="#fff" stroke="#9a9a9a" stroke-width="1" stroke-linejoin="miter"/></svg>
<div id="hs"></div><div id="hthumb"></div>
<svg class="ic" style="left:14px;top:507px" width="8" height="9" viewBox="0 0 8 9"><path d="M6.3 1 L2.2 4.5 L6.3 8" stroke="#606060" stroke-width="2" fill="none"/></svg>
<svg class="ic" style="left:184px;top:507px" width="8" height="9" viewBox="0 0 8 9"><path d="M1.7 1 L5.8 4.5 L1.7 8" stroke="#606060" stroke-width="2" fill="none"/></svg>
<div id="ahdr"></div><div id="ahl"></div><div id="aband"></div>
<svg class="ic" style="left:661px;top:116px" width="11" height="7" viewBox="0 0 11 7"><path d="M0.5 6 L5.5 1 L10.5 6 Z" fill="#000"/></svg>
<svg class="ic" style="left:665px;top:138px" width="6" height="11" viewBox="0 0 6 11"><path d="M0 0.5 L5 5.5 L0 10.5 Z" fill="#000"/></svg>
<div id="status"></div>
<div class="sdiv" style="left:459px"></div>
<div class="sdiv" style="left:592px"></div>
<div class="sdiv" style="left:677px"></div>
<span class="t" id="title" style="left:264.60px;top:5.59px;font-size:15.6px;letter-spacing:-0.313px;color:#1a1a1a;">Computer Management</span>
<span class="t" id="m_file" style="left:17.90px;top:31.84px;font-size:12px;letter-spacing:-0.300px;">File</span>
<span class="t" id="m_action" style="left:51.90px;top:31.84px;font-size:12px;letter-spacing:0.270px;">Action</span>
<span class="t" id="m_view" style="left:103.00px;top:31.84px;font-size:12px;letter-spacing:-0.200px;">View</span>
<span class="t" id="m_help" style="left:143.20px;top:31.84px;font-size:12px;letter-spacing:0.250px;">Help</span>
<span class="t" id="l0" style="left:33.90px;top:83.84px;font-size:12px;letter-spacing:0.024px;">Computer Management (Local</span>
<span class="t" id="l1" style="left:52.90px;top:101.84px;font-size:12px;">System Tools</span>
<span class="t" id="l2" style="left:71.90px;top:119.84px;font-size:12px;letter-spacing:-0.185px;">Task Scheduler</span>
<span class="t" id="l3" style="left:71.90px;top:137.84px;font-size:12px;letter-spacing:-0.341px;">Event Viewer</span>
<span class="t" id="l4" style="left:71.90px;top:155.84px;font-size:12px;letter-spacing:-0.369px;">Shared Folders</span>
<span class="t" id="l5" style="left:71.90px;top:173.84px;font-size:12px;letter-spacing:-0.257px;">Local Users and Groups</span>
<span class="t" id="l6" style="left:71.90px;top:191.84px;font-size:12px;">Performance</span>
<span class="t" id="l7" style="left:71.90px;top:209.84px;font-size:12px;letter-spacing:-0.115px;">Device Manager</span>
<span class="t" id="l8" style="left:52.90px;top:227.84px;font-size:12px;letter-spacing:-0.150px;">Storage</span>
<span class="t" id="l9" style="left:71.90px;top:245.84px;font-size:12px;letter-spacing:-0.043px;">Disk Management</span>
<span class="t" id="l10" style="left:52.90px;top:263.84px;font-size:12px;letter-spacing:-0.062px;">Services and Applications</span>
<span class="t" id="r0" style="left:245.90px;top:83.84px;font-size:12px;letter-spacing:0.090px;">MicroEngine</span>
<span class="t" id="r1" style="left:264.90px;top:101.84px;font-size:12px;letter-spacing:0.130px;">Audio inputs and outputs</span>
<span class="t" id="r2" style="left:264.90px;top:119.84px;font-size:12px;letter-spacing:0.257px;">Computer</span>
<span class="t" id="r3" style="left:264.90px;top:137.84px;font-size:12px;letter-spacing:-0.150px;">Disk drives</span>
<span class="t" id="r4" style="left:264.90px;top:155.84px;font-size:12px;letter-spacing:-0.200px;">Display adapters</span>
<span class="t" id="r5" style="left:264.90px;top:173.84px;font-size:12px;letter-spacing:-0.150px;">DVD/CD-ROM drives</span>
<span class="t" id="r6" style="left:264.90px;top:191.84px;font-size:12px;letter-spacing:-0.068px;">Human Interface Devices</span>
<span class="t" id="r7" style="left:264.90px;top:209.84px;font-size:12px;letter-spacing:0.062px;">IDE ATA/ATAPI controllers</span>
<span class="t" id="r8" style="left:264.90px;top:227.84px;font-size:12px;letter-spacing:-0.225px;">Keyboards</span>
<span class="t" id="r9" style="left:264.90px;top:245.84px;font-size:12px;letter-spacing:0.060px;">Mice and other pointing devices</span>
<span class="t" id="r10" style="left:264.90px;top:263.84px;font-size:12px;letter-spacing:0.343px;">Monitors</span>
<span class="t" id="r11" style="left:264.90px;top:281.84px;font-size:12px;letter-spacing:-0.040px;">Network adapters</span>
<span class="t" id="r12" style="left:264.90px;top:299.84px;font-size:12px;letter-spacing:-0.094px;">Ports (COM &amp; LPT)</span>
<span class="t" id="r13" style="left:283.90px;top:317.84px;font-size:12px;letter-spacing:-0.314px;">ATEN USB to Serial Bridge (COM3)</span>
<span class="t" id="r14" style="left:283.90px;top:335.84px;font-size:12px;letter-spacing:0.072px;">Communications Port (COM1)</span>
<span class="t" id="r15" style="left:283.90px;top:353.84px;font-size:12px;letter-spacing:-0.341px;">ECP Printer Port (LPT1)</span>
<span class="t" id="r16" style="left:264.90px;top:371.84px;font-size:12px;letter-spacing:-0.082px;">Print queues</span>
<span class="t" id="r17" style="left:264.90px;top:389.84px;font-size:12px;letter-spacing:-0.427px;">Processors</span>
<span class="t" id="r18" style="left:264.90px;top:407.84px;font-size:12px;letter-spacing:-0.140px;">Software devices</span>
<span class="t" id="r19" style="left:264.90px;top:425.84px;font-size:12px;letter-spacing:-0.028px;">Sound, video and game controllers</span>
<span class="t" id="r20" style="left:264.90px;top:443.84px;font-size:12px;letter-spacing:-0.087px;">Storage controllers</span>
<span class="t" id="r21" style="left:264.90px;top:461.84px;font-size:12px;letter-spacing:-0.295px;">System devices</span>
<span class="t" id="r22" style="left:264.90px;top:479.84px;font-size:12px;letter-spacing:-0.174px;">Universal Serial Bus controllers</span>
<span class="t" id="a_hdr" style="left:496.68px;top:85.84px;font-size:12px;letter-spacing:-0.360px;font-weight:700;">Actions</span>
<span class="t" id="a_dm" style="left:498.80px;top:110.80px;font-size:15px;letter-spacing:-0.046px;">Device Manager</span>
<span class="t" id="a_more" style="left:523.40px;top:133.84px;font-size:12px;letter-spacing:0.164px;">More Actions</span>
</body></html>
